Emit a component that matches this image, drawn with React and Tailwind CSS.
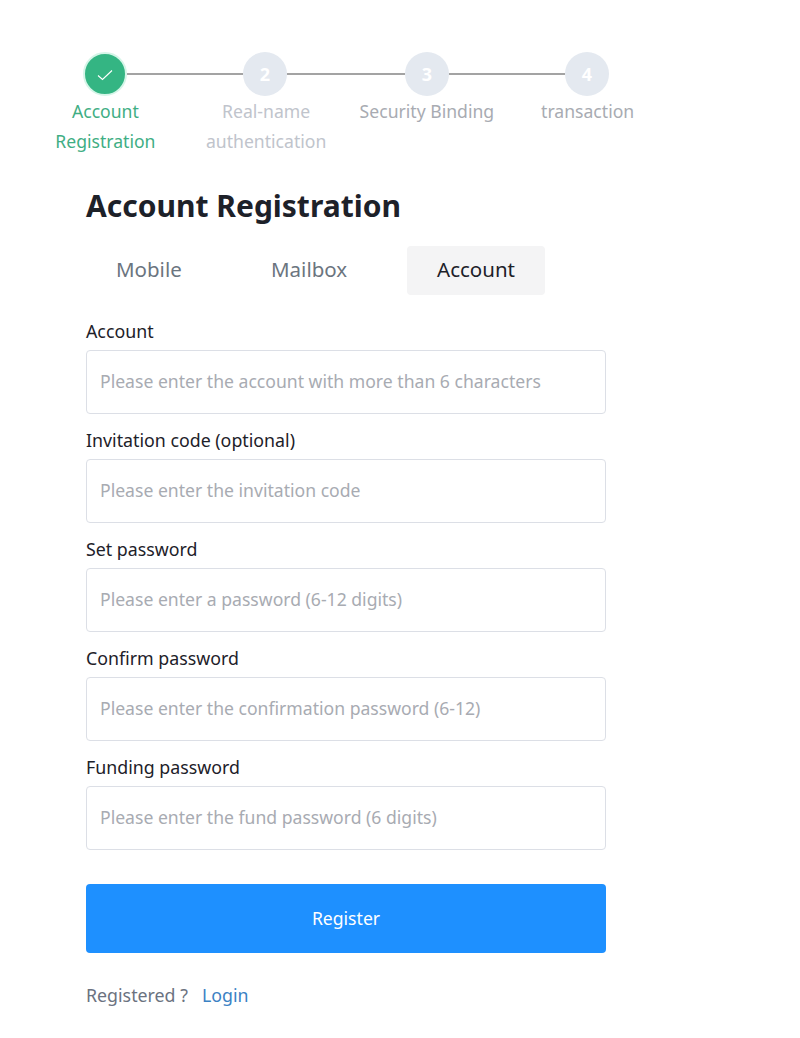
import React from 'react';

const steps = [
  { label: 'Account Registration', width: 'w-[110px]', color: 'text-[#3fae84]' },
  { label: 'Real-name authentication', width: 'w-[130px]', color: 'text-[#c0c4cc]' },
  { label: 'Security Binding', width: 'w-[150px]', color: 'text-[#a8abb2]' },
  { label: 'transaction', width: 'w-[110px]', color: 'text-[#a8abb2]' },
];

const fields = [
  { label: 'Account', placeholder: 'Please enter the account with more than 6 characters' },
  { label: 'Invitation code (optional)', placeholder: 'Please enter the invitation code' },
  { label: 'Set password', placeholder: 'Please enter a password (6-12 digits)' },
  { label: 'Confirm password', placeholder: 'Please enter the confirmation password (6-12)' },
  { label: 'Funding password', placeholder: 'Please enter the fund password (6 digits)' },
];

const StepNumber = ({ n }) => (
  <div className="w-11 h-11 shrink-0 rounded-full bg-[#e4e9f0] flex items-center justify-center text-white text-lg font-bold">
    {n}
  </div>
);

const App = () => {
  return (
    <div className="w-[800px] h-[1038px] bg-white overflow-hidden font-['Noto_Sans',sans-serif]">
      <div className="pt-[52px] pl-[83px] flex items-center">
        <div className="w-11 h-11 shrink-0 rounded-full bg-[#34b583] border-2 border-[#d5f5e8] flex items-center justify-center">
          <svg width="16" height="16" viewBox="0 0 16 16" fill="none" stroke="white" strokeWidth="1.1">
            <path d="M1 9.5 L5.5 13.5 L15 4.5" />
          </svg>
        </div>
        <div className="w-[116px] h-0.5 bg-[#a3a3a3]" />
        <StepNumber n={2} />
        <div className="w-[118px] h-0.5 bg-[#a3a3a3]" />
        <StepNumber n={3} />
        <div className="w-[116px] h-0.5 bg-[#a3a3a3]" />
        <StepNumber n={4} />
      </div>

      <div className="ml-[25px] w-[643px] grid grid-cols-4 h-[60px]">
        {steps.map((step) => (
          <div key={step.label} className="flex justify-center">
            <div className={`${step.width} ${step.color} text-center text-[17.6px] leading-[30px]`}>{step.label}</div>
          </div>
        ))}
      </div>

      <div className="ml-[86px] w-[520px]">
        <h1 className="mt-[26px] text-[30px] leading-[48px] font-bold text-[#1d2129]">Account Registration</h1>

        <div className="mt-[16px] flex h-[49px] text-[20.5px]">
          <div className="w-[127px] pl-[30px] pb-0.5 flex items-center text-[#6b7580]">Mobile</div>
          <div className="w-[194px] pl-[58px] pb-0.5 flex items-center text-[#6b7580]">Mailbox</div>
          <div className="w-[138px] pb-0.5 rounded bg-[#f4f4f5] flex items-center justify-center text-[#1d2129]">Account</div>
        </div>

        <div className="mt-[19px] flex flex-col gap-[9px]">
          {fields.map((field) => (
            <div key={field.label}>
              <label className="block text-[17.8px] leading-[36px] h-[36px] -translate-y-px text-[#1d2129]">{field.label}</label>
              <input
                className="block w-full h-16 px-[13px] pb-0.5 rounded border border-[#dcdfe6] text-[17.6px] placeholder:text-[#a8abb2] outline-none"
                placeholder={field.placeholder}
              />
            </div>
          ))}
        </div>

        <button className="mt-[34px] w-full h-[69px] rounded bg-[#1e90ff] text-white text-[17.6px]">Register</button>

        <div className="mt-[27px] flex gap-3.5 text-[17.8px] leading-[30px]">
          <span className="text-[#6b7280]">Registered ?</span>
          <a className="text-[#3b82c4]">Login</a>
        </div>
      </div>
    </div>
  );
};

export default App;
